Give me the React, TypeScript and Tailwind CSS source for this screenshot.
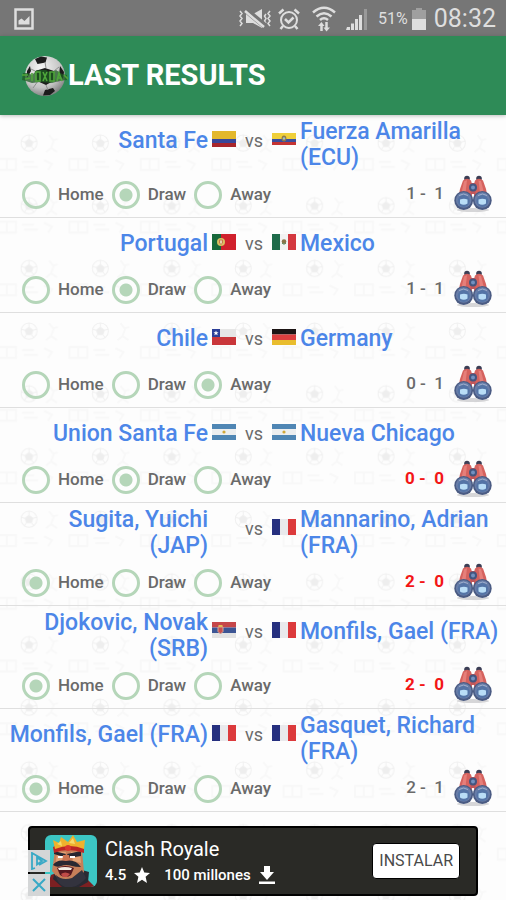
import { useId, type ReactNode } from 'react';

type Pick = 'Home' | 'Draw' | 'Away';

interface Match {
  home: string;
  away: string;
  homeFlag?: string;
  awayFlag?: string;
  result: Pick;
  score: [number, number];
  hit?: boolean;
}

const PICKS: Pick[] = ['Home', 'Draw', 'Away'];

const MATCHES: Match[] = [
  { home: 'Santa Fe', homeFlag: 'co', away: 'Fuerza Amarilla (ECU)', awayFlag: 'ec', result: 'Draw', score: [1, 1] },
  { home: 'Portugal', homeFlag: 'pt', away: 'Mexico', awayFlag: 'mx', result: 'Draw', score: [1, 1] },
  { home: 'Chile', homeFlag: 'cl', away: 'Germany', awayFlag: 'de', result: 'Away', score: [0, 1] },
  { home: 'Union Santa Fe', homeFlag: 'ar', away: 'Nueva Chicago', awayFlag: 'ar', result: 'Draw', score: [0, 0], hit: true },
  { home: 'Sugita, Yuichi (JAP)', away: 'Mannarino, Adrian (FRA)', awayFlag: 'fr', result: 'Home', score: [2, 0], hit: true },
  { home: 'Djokovic, Novak (SRB)', homeFlag: 'rs', away: 'Monfils, Gael (FRA)', awayFlag: 'fr', result: 'Home', score: [2, 0], hit: true },
  { home: 'Monfils, Gael (FRA)', homeFlag: 'fr', away: 'Gasquet, Richard (FRA)', awayFlag: 'fr', result: 'Home', score: [2, 1] },
];

// every flag is drawn on a 24x16 canvas
const FLAGS: Record<string, ReactNode> = {
  co: (
    <>
      <path fill="#e3b82c" d="M0 0h24v8H0z" />
      <path fill="#37479a" d="M0 8h24v4H0z" />
      <path fill="#a8262c" d="M0 12h24v4H0z" />
    </>
  ),
  ec: (
    <>
      <path fill="#efcf3a" d="M0 2h24v6H0z" />
      <path fill="#3a4f9f" d="M0 8h24v3H0z" />
      <path fill="#c43434" d="M0 11h24v3H0z" />
      <ellipse cx="12" cy="7.5" rx="2.4" ry="3" fill="#8f7a4a" />
      <circle cx="12" cy="7.5" r="1.2" fill="#9cc0c9" />
    </>
  ),
  pt: (
    <>
      <path fill="#d0202c" d="M0 0h24v16H0z" />
      <path fill="#17683a" d="M0 0h9v16H0z" />
      <circle cx="9" cy="8" r="4" fill="#d8c060" />
      <path fill="#e6d3ae" stroke="#c9784a" d="M7.5 6h3v3.2L9 10.4 7.5 9.2z" />
    </>
  ),
  mx: (
    <>
      <path fill="#f2f2f2" d="M0 0h24v16H0z" />
      <path fill="#1e6b4a" d="M0 0h8v16H0z" />
      <path fill="#d4383f" d="M16 0h8v16h-8z" />
      <circle cx="12" cy="7.5" r="2.3" fill="#8a7448" />
      <path stroke="#4f7a4a" fill="none" d="M10 9q2 2.5 4 0" />
    </>
  ),
  cl: (
    <>
      <path fill="#e6e6e6" d="M0 0h24v8H0z" />
      <path fill="#c9363a" d="M0 8h24v8H0z" />
      <path fill="#2c3f98" d="M0 0h8v8H0z" />
      <path fill="#fff" d="m4 1.5.7 1.8h1.8L5.1 4.4l.6 1.900L4 5.200 2.300 6.300l.6-1.900L1.500 3.300h1.800z" />
    </>
  ),
  de: (
    <>
      <path fill="#1c1414" d="M0 0h24v5.500H0z" />
      <path fill="#dc3f3f" d="M0 5.500h24V11H0z" />
      <path fill="#e9bd2e" d="M0 11h24v5H0z" />
    </>
  ),
  ar: (
    <>
      <path fill="#4f86b4" d="M0 0h24v16H0z" />
      <path fill="#eceeef" d="M0 5h24v6H0z" />
      <circle cx="12" cy="8" r="1.6" fill="#d0a83a" />
    </>
  ),
  fr: (
    <>
      <path fill="#e9e9ec" d="M0 0h24v16H0z" />
      <path fill="#26307f" d="M0 0h8v16H0z" />
      <path fill="#dc3a3c" d="M16 0h8v16h-8z" />
    </>
  ),
  rs: (
    <>
      <path fill="#c5474a" d="M0 0h24v5.500H0z" />
      <path fill="#3c5594" d="M0 5.500h24V11H0z" />
      <path fill="#e2e2e2" d="M0 11h24v5H0z" />
      <path fill="#c9504d" stroke="#d9a59a" d="M6 5h5v4.500L8.500 12 6 9.500z" />
      <path fill="#e2bd55" d="M6.500 3h4v2h-4z" />
    </>
  ),
};

function Flag({ code }: { code?: string }) {
  return (
    <svg viewBox="0 0 24 16" className="h-4 w-6 shrink-0" aria-hidden="true">
      {code && FLAGS[code]}
    </svg>
  );
}

function Binoculars() {
  return (
    <svg viewBox="0 0 38 38" className="h-[38px] w-[38px]" aria-hidden="true">
      <ellipse cx="19" cy="35" rx="16" ry="2" fill="#c4c4c8" opacity=".7" />
      <circle cx="13" cy="3.5" r="2.8" fill="#3b3e55" />
      <circle cx="25" cy="3.5" r="2.8" fill="#3b3e55" />
      <path fill="#d5625e" d="M9 5.500Q13 2 17 5.500L18 9v13H4.500L6 14zM29 5.500Q25 2 21 5.500L20 9v13h13.500L32 14z" />
      <path fill="#ec8c86" d="M10 6.500 13 5l-1.500 13H7.500z" opacity=".7" />
      <path fill="#ec8c86" d="M24.500 5.500 27 6l3 12h-4z" opacity=".7" />
      <path fill="#c0575a" d="M16.500 8h5v11h-5z" />
      <circle cx="19" cy="12.5" r="4" fill="#44557f" />
      <circle cx="19" cy="12.5" r="2" fill="#7390c0" />
      <circle cx="9.7" cy="25.5" r="9.4" fill="#4a5b83" />
      <circle cx="28.3" cy="25.5" r="9.4" fill="#4a5b83" />
      <circle cx="9.7" cy="25" r="7.8" fill="#687da8" />
      <circle cx="28.3" cy="25" r="7.8" fill="#687da8" />
      <circle cx="9.7" cy="26" r="6" fill="#5474a6" />
      <circle cx="28.3" cy="26" r="6" fill="#5474a6" />
      <path fill="#b9ddf6" d="M6 24.500q4-1.500 7.500 0v4q-3.700 2.500-7.500 0zM24.500 24.500q4-1.500 7.500 0v4q-3.700 2.500-7.500 0z" />
      <path fill="none" stroke="#9fb0ce" d="M5 20.500q4.500-3 9 0M24 20.500q4.500-3 9 0" />
    </svg>
  );
}

function BallPattern() {
  const id = useId();
  return (
    <svg className="absolute inset-0 -z-10 h-full w-full" aria-hidden="true">
      <defs>
        <pattern id={id} width="71.4" height="62.7" patternUnits="userSpaceOnUse" x="-6" y="-3">
          <g fill="none" stroke="#f0f0f0">
            <circle cx="35" cy="31" r="8" />
            <path d="M35 23v4M27 29l4 1M43 29l-4 1M30 38l2-3M40 38l-2-3" />
            <path fill="#eeeeee" d="m35 27 4 3-1.500 4.500h-5L31 30z" />
          </g>
          <g fill="none" stroke="#f8f8f8" strokeWidth="2">
            <path d="M55 23l4 5 5-1M60 28l-3 8 6 4M57 36l-5 4" />
            <path d="M4 47h18v11H4zM13 47v11M50 48l8 4-4 6M28 50h12M30 55h14" />
          </g>
        </pattern>
      </defs>
      <rect width="100%" height="100%" fill={`url(#${id})`} />
    </svg>
  );
}

function StatusBar() {
  return (
    <div className="flex h-9 items-center bg-[#767676] pt-0.5 pr-2.5 pl-3.5 text-[#dedede]">
      <svg viewBox="0 0 20 22" className="h-[22px] w-5" aria-hidden="true">
        <path fill="none" stroke="currentColor" strokeWidth="2.5" d="M1.500 1.500h17v19h-17z" />
        <path fill="currentColor" d="M4.500 16.500v-4l3-2 3 2.500 5-5v8.500z" />
      </svg>
      <div className="ml-auto flex items-center">
        <svg viewBox="0 0 34 22" className="h-[22px] w-[34px]" fill="none" stroke="currentColor" aria-hidden="true">
          <path strokeWidth="1.5" d="m2 3 2 2.500L2 8l2 2.500L2 13l2 2.500L2 18M32 3l-2 2.500L32 8l-2 2.500 2 2.500-2 2.500 2 2.500M28 6l-1.500 2 1.500 2.500-1.500 2.500 1.500 2.500" />
          <path fill="currentColor" stroke="none" d="M8 6h7l9-5v19l-9-5H8z" />
          <path stroke="#767676" strokeWidth="6" d="M9 3l18 15" />
          <path strokeWidth="2.5" d="M7 3l19 16" />
        </svg>
        <svg viewBox="0 0 22 22" className="ml-1.5 h-[22px] w-[22px]" fill="none" stroke="currentColor" strokeWidth="2" aria-hidden="true">
          <circle cx="11" cy="12" r="8" />
          <path strokeWidth="2.5" d="m7 11 3.500 3.500 5-5M1 5.500 5.500 1.500M21 5.500 16.500 1.500M5 18l-2.500 3M17 18l2.500 3" />
        </svg>
        <svg viewBox="0 0 24 26" className="ml-3 h-[26px] w-6" fill="none" stroke="currentColor" aria-hidden="true">
          <path strokeWidth="2.5" d="M1 6.500q11-9.500 22 0M4.500 10.500q7.500-6.500 15 0M8 14q4-3.500 8 0" />
          <path strokeWidth="2.5" d="M9.500 25v-7M14.500 16v7" />
          <path fill="currentColor" stroke="none" d="m6 20 3.500-4 3 4zM11.500 21.500l3 4 3.500-4z" />
        </svg>
        <svg viewBox="0 0 22 22" className="ml-2.5 h-[22px] w-[22px]" fill="currentColor" aria-hidden="true">
          <path d="M1 19h3v3H0zM5 15.500h3V22H5zM9 11h3v11H9zM13 7h3v15h-3z" />
          <path d="M18 1h3v21h-3z" opacity=".35" />
        </svg>
        <span className="ml-2.5 text-base">51%</span>
        <svg viewBox="0 0 14 22" className="ml-1 h-[22px] w-3.5" fill="currentColor" aria-hidden="true">
          <path d="M4 0h6v2h4v9H0V2h4z" opacity=".4" />
          <path d="M0 11h14v11H0z" />
        </svg>
        <span className="ml-2 text-[25px]">08:32</span>
      </div>
    </div>
  );
}

function Logo() {
  return (
    <svg viewBox="0 0 46 42" className="h-[42px] w-[46px]" aria-hidden="true">
      <defs>
        <radialGradient id="ball" cx=".4" cy=".3" r=".75">
          <stop offset="0" stopColor="#f6f6f6" />
          <stop offset=".65" stopColor="#c4c4c4" />
          <stop offset="1" stopColor="#767676" />
        </radialGradient>
      </defs>
      <circle cx="23" cy="21" r="20" fill="url(#ball)" />
      <path fill="#1c1c1c" d="m13 4 6-2.500 6 1-1.500 5-8 1.500zM13 16l10-3 9 3 1 9-9 5-9-4zM38 11l4 6-1 7-4-4zM23 35l8-2 2 3-5 4-7 .5zM5 16l3-5 1 5-4 7z" />
      <path fill="none" stroke="#8f8f8f" d="M23 7l1 6M13 16 9 14M16 26l-5 7M24 30l2 5M33 25l5 2M32 16l5-4" />
      {/* green lettering across the ball */}
      <path fill="#1d5c22" d="M1 18h5l4 2 5-5h9l5 3 5-3 6 4 5 1v5l-8 1-7 2-12-1-8 1-6-2-4-1z" opacity=".75" />
      <path
        fill="none"
        stroke="#4fa63b"
        strokeWidth="1.6"
        d="M0 20h6M3 24l5-1M10 18v8M14 17h4v9h-4zM21 17l4 9M25 17l-4 9M28 17h4v9h-4zM35 26l2-8 3 8M35 23h4M42 20l4 4"
      />
    </svg>
  );
}

function MatchRow({ match, index }: { match: Match; index: number }) {
  return (
    <li className="border-b border-[#dfdfdf]">
      <div className="flex items-start text-[23px] leading-[26px] font-medium text-[#4c86e8]">
        <div className="flex min-h-12 flex-1 items-center justify-end pt-1 pl-2 text-right">{match.home}</div>
        <div className="flex h-12 shrink-0 items-center px-1">
          <Flag code={match.homeFlag} />
          <span className="w-9 pt-1 text-center text-lg font-normal text-[#6b6b6b]">vs</span>
          <Flag code={match.awayFlag} />
        </div>
        <div className="flex min-h-12 flex-1 items-center pt-1 pr-1.5">{match.away}</div>
      </div>
      <div className="flex h-[46px] items-center pr-3.5 pl-[22px]">
        <fieldset className="flex items-center gap-2 pt-0.5">
          {PICKS.map((pick) => (
            <label key={pick} className="flex items-center gap-2 text-[17px] font-medium text-[#6a6a6a]">
              <input
                type="radio"
                name={`match-${index}`}
                defaultChecked={pick === match.result}
                className="h-7 w-7 appearance-none rounded-full border-[3px] border-[#b5d6b9] bg-clip-padding checked:bg-[radial-gradient(circle,#b5d6b9_6px,transparent_7px)]"
              />
              {pick}
            </label>
          ))}
        </fieldset>
        <span
          className={
            match.hit
              ? 'ml-auto text-[17px] font-bold whitespace-pre text-[#f31616]'
              : 'ml-auto text-[17px] font-medium whitespace-pre text-[#6a6a6a]'
          }
        >
          {`${match.score[0]} -  ${match.score[1]}`}
        </span>
        <button type="button" aria-label="Details" className="ml-2.5">
          <Binoculars />
        </button>
      </div>
    </li>
  );
}

function KingPicture() {
  return (
    <svg viewBox="0 0 52 52" className="h-[52px] w-[52px] rounded-md" aria-hidden="true">
      <path fill="#3cc6c4" d="M0 0h52v52H0z" />
      <path fill="#7c2022" d="M2 52l4-12 10-4 26 8 8 8z" />
      <path fill="#292a33" d="M37 35l7 2-1 10-9 5H17L8 44l2-8z" />
      <path fill="#c67f59" d="M10 15h27l2 22-9 9H15L7 36z" />
      <path fill="#e3a174" d="M12 17h9l-2 9-8 1zM26 17h9l1 11-8-2z" />
      <path fill="#282730" d="M9 16l12 3-2 3-10-3zM22 19l14-3v5l-12 2z" />
      <path fill="#fff" d="M13 21h5v2h-5zM25 21h5v2h-5z" />
      <path fill="#cb7451" d="M18 20h6l2 8h-9z" />
      <path fill="#2a2932" d="M8 30q4-6 13-4 9-2 15 6-6 0-9-1-6-2-11 0-4 2-8-1z" />
      <path fill="#551820" d="M12 33q8-4 17 0l-3 7q-5 4-11 0z" />
      <path fill="#f4eee4" d="M13 33q7-2 14 0l-1 2H14z" />
      <path fill="#c14b47" d="M16 39q4-3 9 0l-3 3h-4z" />
      <path fill="#33333e" d="M11 40q6 6 16 3l10-8 4 8q-9 11-21 9-8-3-9-12z" />
      <path fill="#bc2525" d="M8 12q13-7 31 0v6q-17-6-30 0z" />
      <path fill="#efb12d" d="M8 5l6 3 2-6 7 5 5-7 4 7 8-2-1 9q-14-6-29 0z" />
      <path fill="#f7d96a" d="M12 9l4-3 1 5zM24 8l4-5 2 6z" />
      <circle cx="23" cy="13" r="3" fill="#da3530" />
    </svg>
  );
}

function AdBanner() {
  return (
    <aside className="relative mx-7 mt-3.5 flex h-[70px] items-center rounded-sm border-2 border-black bg-[#2a2a26] pr-4 pl-[15px] text-white">
      <KingPicture />
      <div className="ml-2">
        <div className="text-xl leading-7">Clash Royale</div>
        <div className="flex items-center text-[15px] leading-6 font-medium">
          4.5
          <svg viewBox="0 0 16 16" className="ml-2 h-4 w-4" fill="currentColor" aria-hidden="true">
            <path d="m8 0 2.300 5.500 5.700.4-4.400 3.800L13 16l-5-3.300L3 16l1.400-6.300L0 5.900l5.700-.4z" />
          </svg>
          <span className="ml-3.5">100 millones</span>
          <svg viewBox="0 0 16 18" className="ml-2 h-[18px] w-4" fill="currentColor" aria-hidden="true">
            <path d="M5 0h6v6h4l-7 8-7-8h4zM0 15.500h16V18H0z" />
          </svg>
        </div>
      </div>
      <button type="button" className="ml-auto h-9 rounded border border-black bg-white px-1.5 text-base text-[#4a4a4a]">
        INSTALAR
      </button>
      <div className="absolute -bottom-0.5 -left-0.5 flex flex-col gap-0.5">
        <button type="button" aria-label="Ad choices" className="bg-[#d4d6d7] p-0.5">
          <svg viewBox="0 0 18 18" className="h-[18px] w-[18px]" fill="none" stroke="#37a9c6" strokeWidth="1.8" aria-hidden="true">
            <path d="M5 16 2 17V1l14 8-7 4M7 5.500v7l5-3.500z" />
          </svg>
        </button>
        <button type="button" aria-label="Close ad" className="bg-[#d4d6d7] p-0.5">
          <svg viewBox="0 0 18 18" className="h-[18px] w-[18px]" fill="none" stroke="#37a9c6" strokeWidth="2" aria-hidden="true">
            <path d="m3 3 12 12M15 3 3 15" />
          </svg>
        </button>
      </div>
    </aside>
  );
}

export default function App() {
  return (
    <div className="min-h-screen bg-[#fdfdfd] font-[Roboto,sans-serif]">
      <StatusBar />
      <header className="relative z-10 flex h-[79px] items-center bg-[#2e8b57] pl-[22px] shadow-[0_1px_4px_rgba(0,0,0,0.25)]">
        <Logo />
        <h1 className="text-[29px] font-bold text-white">LAST RESULTS</h1>
      </header>
      <main className="relative isolate pb-1">
        <BallPattern />
        <ul>
          {MATCHES.map((match, i) => (
            <MatchRow key={i} match={match} index={i} />
          ))}
        </ul>
        <AdBanner />
      </main>
    </div>
  );
}
